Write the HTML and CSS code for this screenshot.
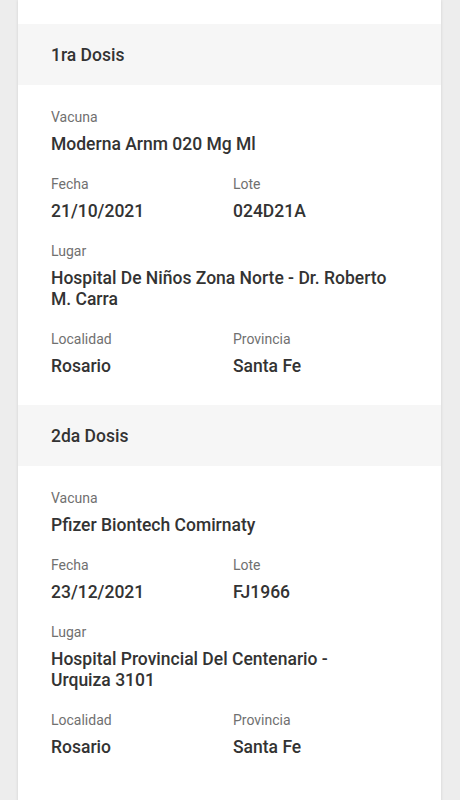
FILE: index.html
```html
<!DOCTYPE html>
<html lang="es">
<head>
<meta charset="utf-8">
<title>Dosis</title>
<link rel="stylesheet" href="styles.css">
</head>
<body>
<div class="card">
  <div class="top-gap"></div>
  <section class="dose">
    <h2 class="dose-title">1ra Dosis</h2>
    <div class="dose-body">
      <div class="field full">
        <div class="label">Vacuna</div>
        <div class="value">Moderna Arnm 020 Mg Ml</div>
      </div>
      <div class="field">
        <div class="label">Fecha</div>
        <div class="value">21/10/2021</div>
      </div>
      <div class="field">
        <div class="label">Lote</div>
        <div class="value">024D21A</div>
      </div>
      <div class="field full">
        <div class="label">Lugar</div>
        <div class="value">Hospital De Niños Zona Norte - Dr. Roberto M. Carra</div>
      </div>
      <div class="field">
        <div class="label">Localidad</div>
        <div class="value">Rosario</div>
      </div>
      <div class="field">
        <div class="label">Provincia</div>
        <div class="value">Santa Fe</div>
      </div>
    </div>
  </section>
  <section class="dose">
    <h2 class="dose-title">2da Dosis</h2>
    <div class="dose-body">
      <div class="field full">
        <div class="label">Vacuna</div>
        <div class="value">Pfizer Biontech Comirnaty</div>
      </div>
      <div class="field">
        <div class="label">Fecha</div>
        <div class="value">23/12/2021</div>
      </div>
      <div class="field">
        <div class="label">Lote</div>
        <div class="value">FJ1966</div>
      </div>
      <div class="field full">
        <div class="label">Lugar</div>
        <div class="value">Hospital Provincial Del Centenario - Urquiza 3101</div>
      </div>
      <div class="field">
        <div class="label">Localidad</div>
        <div class="value">Rosario</div>
      </div>
      <div class="field">
        <div class="label">Provincia</div>
        <div class="value">Santa Fe</div>
      </div>
    </div>
  </section>
</div>
</body>
</html>
```
FILE: styles.css
```css
html, body {
  margin: 0;
  padding: 0;
}
body {
  background: #ededed;
  font-family: Roboto, "Noto Sans", "Liberation Sans", sans-serif;
  color: #333333;
  height: 800px;
  overflow: hidden;
}
.card {
  margin: 0 19px 0 18px;
  background: #ffffff;
  min-height: 820px;
  box-shadow: 0 0 3px rgba(0, 0, 0, 0.12);
}
.top-gap {
  height: 24px;
}
.dose-title {
  margin: 0;
  height: 61px;
  display: flex;
  align-items: center;
  padding-left: 33px;
  background: #f6f6f6;
  font-size: 17.5px;
  font-weight: 500;
  color: #333333;
}
.dose-body {
  display: grid;
  grid-template-columns: 182px 1fr;
  row-gap: 19px;
  padding: 22px 33px 28px 33px;
}
.field.full {
  grid-column: 1 / -1;
}
.label {
  font-size: 14px;
  line-height: 20px;
  color: #707070;
  margin-bottom: 7px;
}
.value {
  font-size: 17.5px;
  line-height: 21px;
  font-weight: 500;
  color: #333333;
  max-width: 338px;
}
```
